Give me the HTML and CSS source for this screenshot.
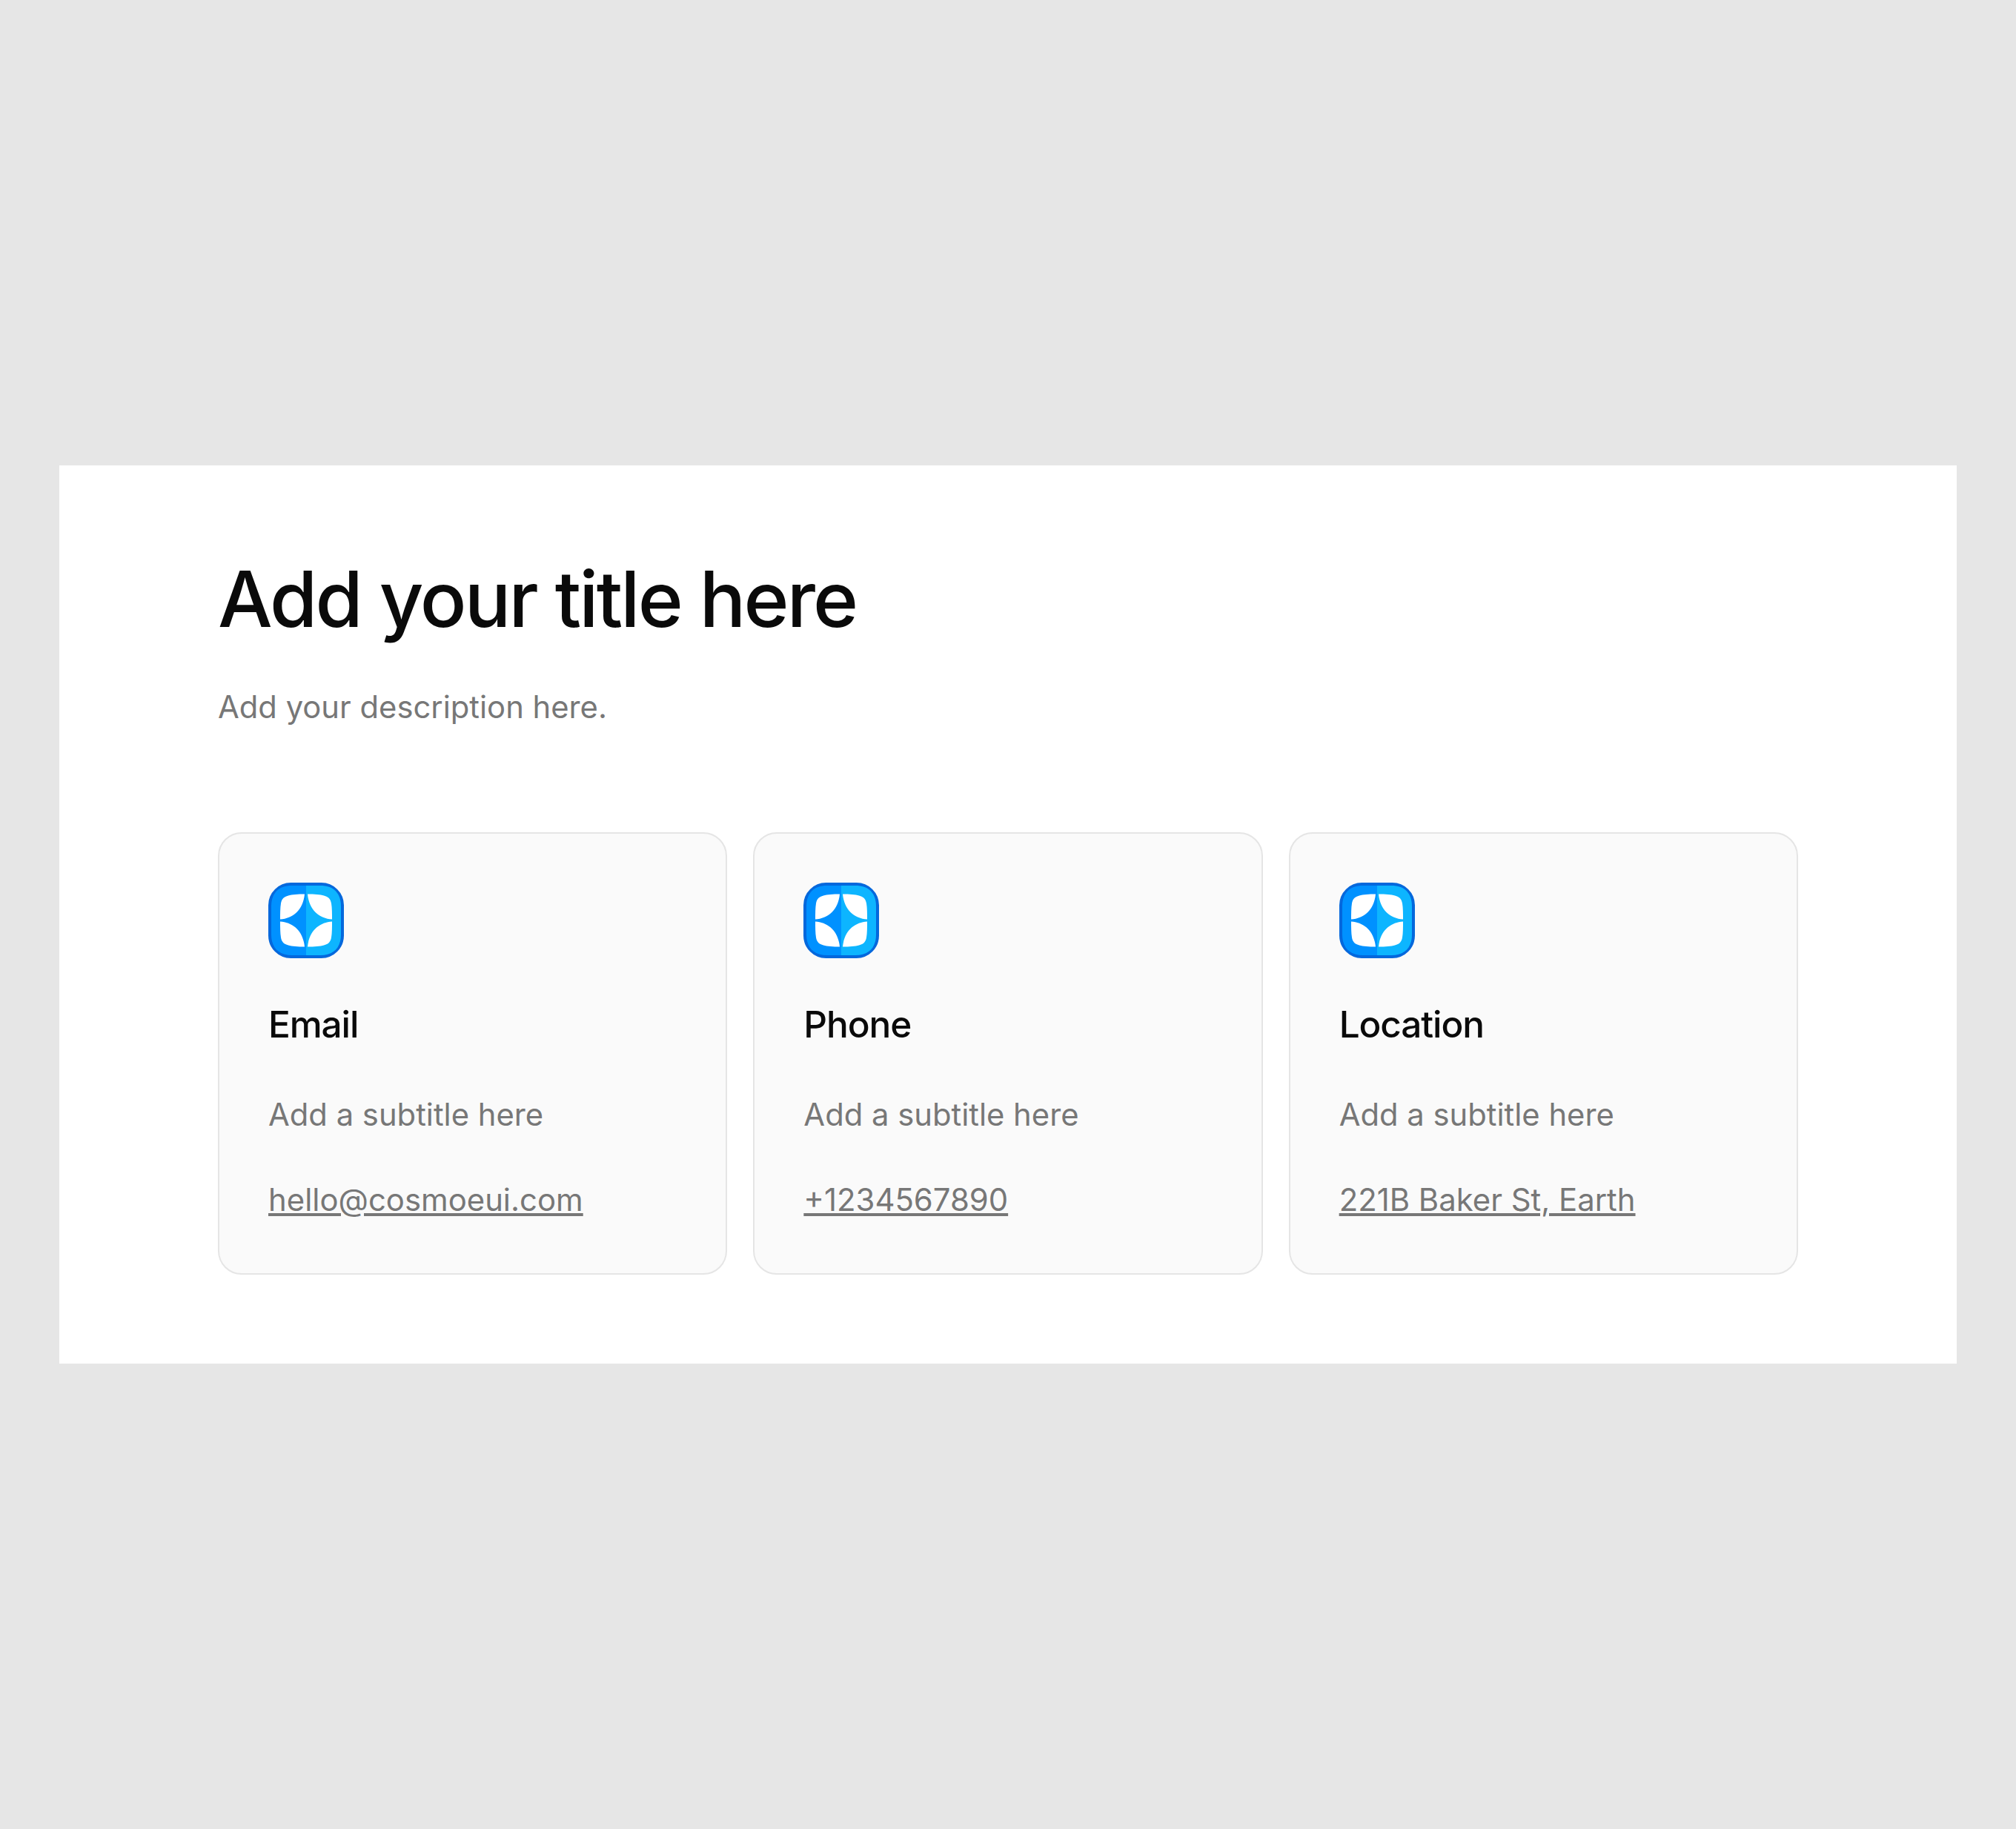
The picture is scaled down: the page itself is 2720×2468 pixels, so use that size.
FILE: index.html
```html
<!DOCTYPE html>
<html lang="en">
<head>
<meta charset="utf-8">
<title>Contact</title>
<link rel="stylesheet" href="styles.css">
</head>
<body>
<svg class="defs" width="0" height="0" aria-hidden="true">
  <symbol id="spark" viewBox="0 0 102 102">
    <rect x="1.500" y="1.500" width="99" height="99" rx="29" fill="#0066dd" stroke="#0668dc" stroke-width="3"/>
    <path d="M51 4H32C14 4 4 14 4 32V70C4 88 14 98 32 98H51Z" fill="#0091ff"/>
    <path d="M51 4H70C88 4 98 14 98 32V70C98 88 88 98 70 98H51Z" fill="#0db5ff"/>
    <path d="M49 15.500C40 15.500 32 16 27 17.500C21 19 18 22 17 28C16 34 16 42 16 49.500C33 48.500 47 37 49 15.500Z" fill="#fff"/>
    <path d="M53 15.500C62 15.500 70 16 75 17.500C81 19 84 22 85 28C86 34 86 42 86 49.500C69 48.500 55 37 53 15.500Z" fill="#fff"/>
    <path d="M49 86.500C40 86.500 32 86 27 84.500C21 83 18 80 17 74C16 68 16 60 16 52.500C33 53.500 47 65 49 86.500Z" fill="#fff"/>
    <path d="M53 86.500C62 86.500 70 86 75 84.500C81 83 84 80 85 74C86 68 86 60 86 52.500C69 53.500 55 65 53 86.500Z" fill="#fff"/>
  </symbol>
</svg>
<main class="panel">
  <h1 class="title">Add your title here</h1>
  <p class="description">Add your description here.</p>
  <section class="cards">
    <article class="card">
      <svg class="icon"><use href="#spark"/></svg>
      <h2 class="card-title">Email</h2>
      <p class="card-subtitle">Add a subtitle here</p>
      <a class="card-link" href="#">hello@cosmoeui.com</a>
    </article>
    <article class="card">
      <svg class="icon"><use href="#spark"/></svg>
      <h2 class="card-title">Phone</h2>
      <p class="card-subtitle">Add a subtitle here</p>
      <a class="card-link" href="#">+1234567890</a>
    </article>
    <article class="card">
      <svg class="icon"><use href="#spark"/></svg>
      <h2 class="card-title">Location</h2>
      <p class="card-subtitle">Add a subtitle here</p>
      <a class="card-link" href="#">221B Baker St, Earth</a>
    </article>
  </section>
</main>
</body>
</html>
```
FILE: styles.css
```css
* { box-sizing: border-box; }
html, body { height: 100%; }
body {
  margin: 0;
  background: #e6e6e6;
  font-family: Inter, "Liberation Sans", sans-serif;
  display: flex;
  align-items: center;
  justify-content: center;
}
.defs { position: absolute; }
.panel {
  width: 2560px;
  height: 1212px;
  background: #fff;
  padding: 119px 214px 0;
}
.title {
  margin: 0;
  font-size: 104px;
  line-height: 122px;
  font-weight: 500;
  letter-spacing: -2.850px;
  color: #0a0a0a;
}
.description {
  margin: 55px 0 0;
  font-size: 41.750px;
  line-height: 60px;
  font-weight: 400;
  color: #777777;
}
.cards {
  margin-top: 139px;
  display: grid;
  grid-template-columns: repeat(3, 1fr);
  gap: 35px;
}
.card {
  height: 597px;
  border: 2px solid #e5e5e5;
  border-radius: 32px;
  background: #fafafa;
  padding: 66px 66px 0;
  display: flex;
  flex-direction: column;
  align-items: flex-start;
}
.icon { width: 102px; height: 102px; display: block; }
.card-title {
  margin: 57px 0 0;
  font-size: 49.500px;
  line-height: 64px;
  font-weight: 500;
  letter-spacing: -1.100px;
  color: #0a0a0a;
}
.card-subtitle {
  margin: 60px 0 0;
  font-size: 41.750px;
  line-height: 60px;
  color: #777777;
}
.card-link {
  margin-top: 55px;
  font-size: 41.850px;
  line-height: 60px;
  color: #777777;
  text-decoration: underline;
}
```
